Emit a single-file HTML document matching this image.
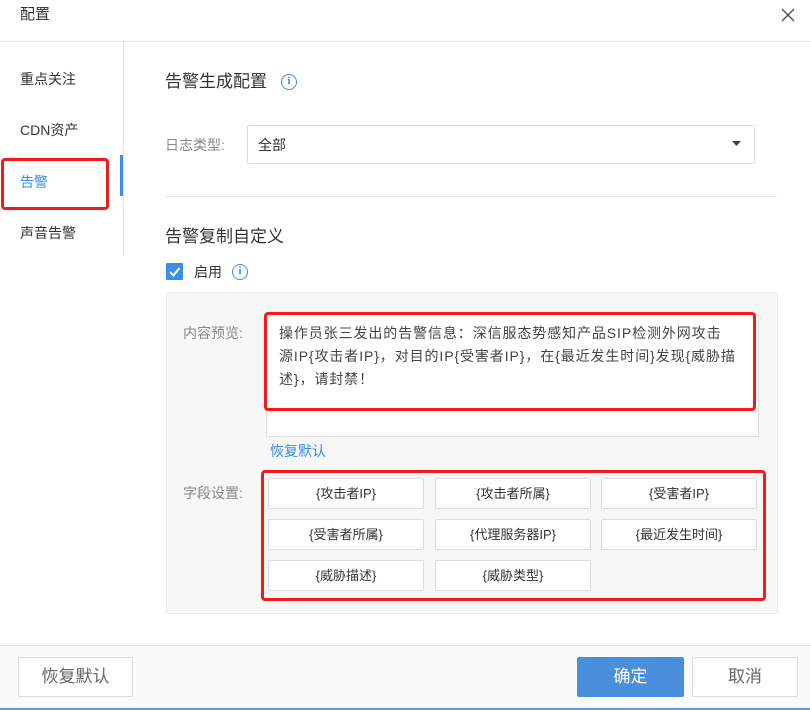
<!DOCTYPE html>
<html><head><meta charset="utf-8"><style>
*{box-sizing:border-box;margin:0;padding:0}
body{width:810px;height:710px;background:#fff;font-family:"Liberation Sans","Noto Sans CJK SC",sans-serif;color:#333;position:relative;overflow:hidden;font-size:14px}
.a{position:absolute}
.hdr{left:0;top:0;width:810px;height:42px;border-bottom:1px solid #e3e3e3}
.nav{left:0;top:42px;width:124px;height:213px;border-right:1px solid #e6e6e6}
.ni{position:absolute;left:20px;font-size:14px;color:#333;line-height:20px}
.info{display:inline-block;width:16px;height:16px;border:1.5px solid #3a8ee6;border-radius:50%;color:#3a8ee6;font-size:11px;line-height:13px;text-align:center;font-weight:bold;font-family:"Liberation Serif",serif}
.red{border:3px solid #f01c1c;border-radius:4px}
.fb{position:absolute;width:156px;height:31px;background:#fff;border:1px solid #ddd;border-radius:2px;text-align:center;line-height:29px;font-size:13px;color:#333}
.btn{position:absolute;top:657px;height:40px;border:1px solid #ddd;border-radius:2px;background:#fff;text-align:center;line-height:38px;font-size:17px;color:#666}
</style></head><body>
<div class="a hdr"></div>
<div class="a" style="left:20px;top:5px;font-size:15px;line-height:20px;color:#333">配置</div>
<svg class="a" style="left:780px;top:7px" width="16" height="16"><path d="M2 2L14 14M14 2L2 14" stroke="#555" stroke-width="1.5"/></svg>
<div class="a nav"></div>
<div class="ni" style="top:69px">重点关注</div>
<div class="ni" style="top:120px">CDN资产</div>
<div class="ni" style="top:172px;color:#3a8ee6">告警</div>
<div class="ni" style="top:223px">声音告警</div>
<div class="a" style="left:120px;top:155px;width:3px;height:41px;background:#3a8ee6"></div>
<div class="a red" style="left:1px;top:158px;width:108px;height:52px"></div>

<div class="a" style="left:165px;top:70px;font-size:17px;line-height:24px">告警生成配置</div>
<div class="a info" style="left:281px;top:74px">i</div>
<div class="a" style="left:165px;top:135px;color:#888;font-size:14px;line-height:20px">日志类型:</div>
<div class="a" style="left:247px;top:125px;width:508px;height:39px;border:1px solid #ddd;border-radius:2px"></div>
<div class="a" style="left:258px;top:135px;line-height:20px">全部</div>
<svg class="a" style="left:732px;top:141px" width="9" height="6"><path d="M0 0H9L4.5 5Z" fill="#444"/></svg>
<div class="a" style="left:165px;top:196px;width:612px;height:1px;background:#e6e6e6"></div>
<div class="a" style="left:165px;top:225px;font-size:17px;line-height:24px">告警复制自定义</div>
<div class="a" style="left:166px;top:263px;width:17px;height:17px;background:#3a8ee6;border-radius:1px"></div>
<svg class="a" style="left:166px;top:263px" width="17" height="17"><path d="M4 9L7.5 12.5L13.5 5" stroke="#fff" stroke-width="2" fill="none"/></svg>
<div class="a" style="left:194px;top:262px;line-height:20px">启用</div>
<div class="a info" style="left:232px;top:264px">i</div>

<div class="a" style="left:166px;top:292px;width:612px;height:322px;background:#f7f7f7;border:1px solid #eee"></div>
<div class="a" style="left:183px;top:323px;color:#888;line-height:20px">内容预览:</div>
<div class="a" style="left:266px;top:314px;width:493px;height:123px;background:#fff;border:1px solid #ddd;border-radius:2px"></div>
<div class="a" style="left:279px;top:322px;width:475px;font-size:14px;line-height:23px;color:#444;letter-spacing:0.9px;white-space:nowrap">操作员张三发出的告警信息：深信服态势感知产品SIP检测外网攻击<br>源IP{攻击者IP}，对目的IP{受害者IP}，在{最近发生时间}发现{威胁描<br>述}，请封禁！</div>
<div class="a red" style="left:264px;top:312px;width:492px;height:99px"></div>
<div class="a" style="left:270px;top:441px;color:#3a8ee6;line-height:20px">恢复默认</div>
<div class="a" style="left:183px;top:483px;color:#888;line-height:20px">字段设置:</div>
<div class="fb" style="left:268px;top:478px">{攻击者IP}</div>
<div class="fb" style="left:435px;top:478px">{攻击者所属}</div>
<div class="fb" style="left:601px;top:478px">{受害者IP}</div>
<div class="fb" style="left:268px;top:519px">{受害者所属}</div>
<div class="fb" style="left:435px;top:519px">{代理服务器IP}</div>
<div class="fb" style="left:601px;top:519px">{最近发生时间}</div>
<div class="fb" style="left:268px;top:560px">{威胁描述}</div>
<div class="fb" style="left:435px;top:560px">{威胁类型}</div>
<div class="a red" style="left:261px;top:470px;width:505px;height:131px"></div>

<div class="a" style="left:0;top:645px;width:810px;height:65px;background:#fafafa;border-top:1px solid #e3e3e3"></div>
<div class="btn" style="left:18px;width:115px">恢复默认</div>
<div class="btn" style="left:577px;width:107px;background:#4a8fdb;border-color:#4a8fdb;color:#fff">确定</div>
<div class="btn" style="left:692px;width:106px">取消</div>
<div class="a" style="left:0;top:708px;width:810px;height:2px;background:#5b9bd8"></div>
</body></html>
